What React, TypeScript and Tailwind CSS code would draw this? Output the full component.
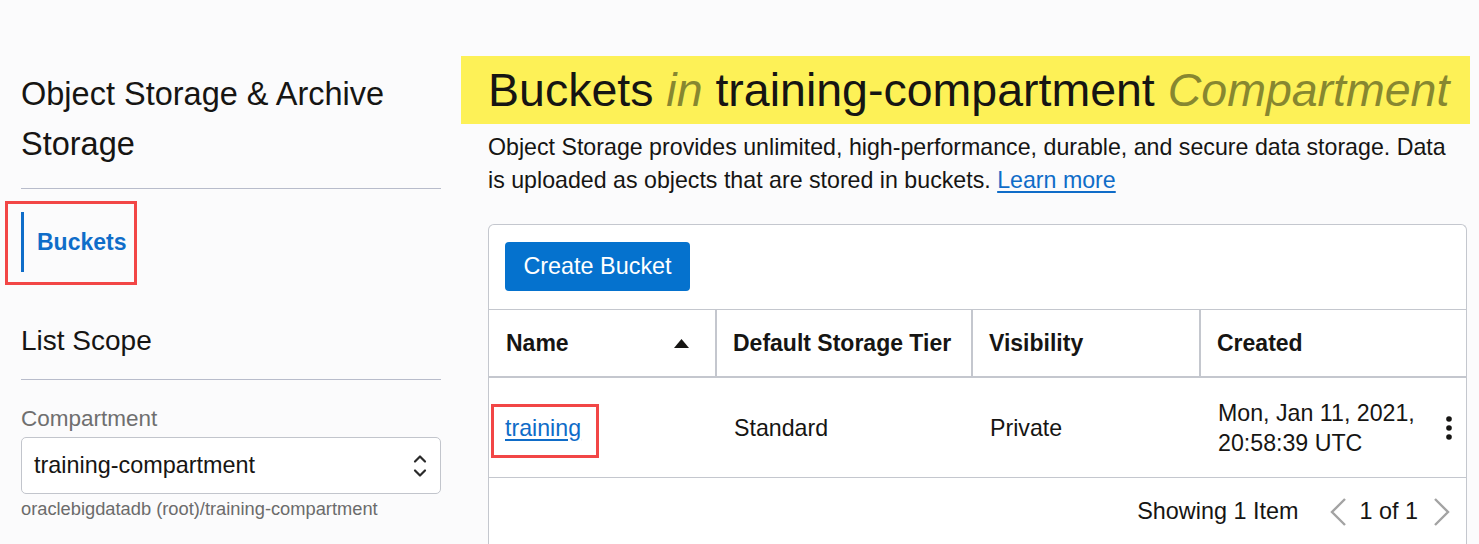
import React from "react";

const font = { fontFamily: '"Liberation Sans", Arial, sans-serif' };

function Chevrons() {
  return (
    <svg width="16" height="26" viewBox="0 0 16 26" fill="none" stroke="#2a2a2a" strokeWidth="2.2" strokeLinecap="round" strokeLinejoin="round">
      <path d="M3 8.5 L8 3.5 L13 8.5" />
      <path d="M3 17.5 L8 22.5 L13 17.5" />
    </svg>
  );
}

export default function App() {
  return (
    <div className="w-[1479px] h-[544px] overflow-hidden bg-[#fbfbfc] text-[#161513] flex" style={font}>
      {/* Sidebar */}
      <aside className="w-[461px] shrink-0 pl-[21px] pr-[20px] pt-[69px]">
        <h1 className="text-[32.5px] leading-[50px] font-normal">Object Storage &amp; Archive Storage</h1>
        <div className="mt-[19px] h-px bg-[#b8bccb]" />
        <nav className="relative mt-[23px]">
          <div className="border-l-[3px] border-[#0f6dc9] h-[60px] flex items-center pl-[13px]">
            <span className="text-[23px] font-bold text-[#0f6dc9]">Buckets</span>
          </div>
          <div className="absolute left-[-16px] top-[-11px] w-[132px] h-[84px] border-[3px] border-[#f24646]" />
        </nav>
        <h2 className="mt-[53px] text-[28px] leading-[32px] font-normal">List Scope</h2>
        <div className="mt-[22px] h-px bg-[#b8bccb]" />
        <div className="mt-[26px] text-[22.5px] leading-[26px] text-[#6f6f6f]">Compartment</div>
        <div className="mt-[5px] h-[57px] rounded-[5px] border border-[#c2c5cc] bg-white flex items-center justify-between pl-[12px] pr-[12px]">
          <span className="text-[23.4px]">training-compartment</span>
          <Chevrons />
        </div>
        <div className="mt-[5px] text-[18.3px] leading-[20px] text-[#6b6b6b] whitespace-nowrap">oraclebigdatadb (root)/training-compartment</div>
      </aside>

      {/* Main */}
      <main className="flex-1 pt-[56px] pr-[10px]">
        <div className="h-[68px] bg-[#fdf157] flex items-center pl-[27px]">
          <span className="text-[46.5px] leading-none whitespace-nowrap">
            Buckets <i className="text-[#878730]">in</i> training-compartment <i className="text-[#878730]">Compartment</i>
          </span>
        </div>
        <div className="pl-[27px] pr-[3px]">
          <p className="mt-[7px] text-[23.2px] leading-[33px] w-[975px]">
            Object Storage provides unlimited, high-performance, durable, and secure data storage. Data is uploaded as objects that are stored in buckets.{" "}
            <a className="text-[#0f6cc8] underline underline-offset-[3px]" href="#">Learn more</a>
          </p>
          <div className="mt-[27px] bg-white border border-[#c4c7ce] rounded-t-[6px] border-b-0 w-[979px] h-[400px]">
            <div className="h-[84px] pl-[16px] pt-[17px]">
              <button className="h-[49px] w-[185px] rounded-[4px] bg-[#0572ce] text-white text-[23.4px]">Create Bucket</button>
            </div>
            {/* header */}
            <div className="grid grid-cols-[228px_256px_228px_1fr] border-t border-b-2 border-[#c4c7ce] h-[69px]">
              <div className="flex items-center justify-between pl-[17px] pr-[26px] border-r-2 border-[#c4c7ce]">
                <span className="text-[23px] font-bold">Name</span>
                <svg width="15" height="9" viewBox="0 0 15 9"><path d="M0 9 L7.5 0 L15 9 Z" fill="#161513" /></svg>
              </div>
              <div className="flex items-center pl-[16px] border-r-2 border-[#c4c7ce]">
                <span className="text-[23px] font-bold whitespace-nowrap">Default Storage Tier</span>
              </div>
              <div className="flex items-center pl-[16px] border-r-2 border-[#c4c7ce]">
                <span className="text-[23px] font-bold">Visibility</span>
              </div>
              <div className="flex items-center pl-[16px]">
                <span className="text-[23px] font-bold">Created</span>
              </div>
            </div>
            {/* row */}
            <div className="grid grid-cols-[228px_256px_228px_1fr] border-b border-[#c4c7ce] h-[100px] text-[23.2px] leading-[30px]">
              <div className="flex items-center pl-[16px]">
                <span className="relative">
                  <a href="#" className="text-[#0f6cc8] underline underline-offset-[3px]">training</a>
                  <span className="absolute left-[-14px] top-[-9px] w-[108px] h-[54px] border-[3px] border-[#f24646]" />
                </span>
              </div>
              <div className="flex items-center pl-[17px]">Standard</div>
              <div className="flex items-center pl-[17px]">Private</div>
              <div className="flex items-center justify-between pl-[17px] pr-[14px]">
                <span className="leading-[30px] whitespace-nowrap">Mon, Jan 11, 2021,<br />20:58:39 UTC</span>
                <svg width="6" height="24" viewBox="0 0 6 24"><circle cx="3" cy="3" r="2.8" fill="#161513" /><circle cx="3" cy="12" r="2.8" fill="#161513" /><circle cx="3" cy="21" r="2.8" fill="#161513" /></svg>
              </div>
            </div>
            {/* footer */}
            <div className="h-[68px] flex items-center justify-end pr-[14px] text-[23.4px]">
              <span>Showing 1 Item</span>
              <svg className="ml-[30px]" width="20" height="30" viewBox="0 0 20 30" fill="none" stroke="#a3a3a3" strokeWidth="2.4"><path d="M17 2 L4 15 L17 28" /></svg>
              <span className="ml-[11px]">1 of 1</span>
              <svg className="ml-[14px]" width="20" height="30" viewBox="0 0 20 30" fill="none" stroke="#a3a3a3" strokeWidth="2.4"><path d="M3 2 L16 15 L3 28" /></svg>
            </div>
          </div>
        </div>
      </main>
    </div>
  );
}
